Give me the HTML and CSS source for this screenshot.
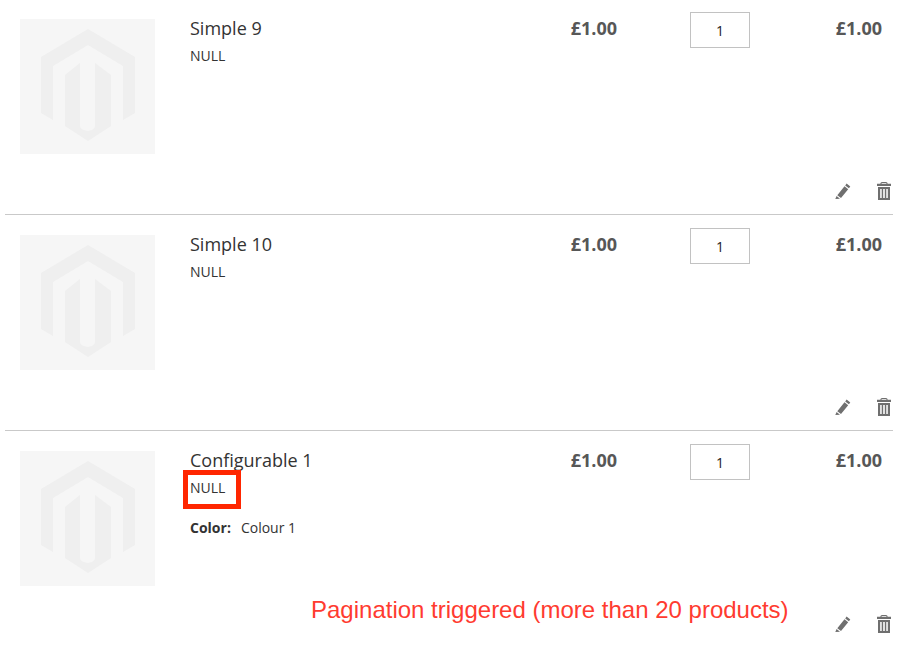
FILE: index.html
```html
<!DOCTYPE html>
<html lang="en">
<head>
<meta charset="utf-8">
<title>Cart</title>
<link rel="stylesheet" href="styles.css">
</head>
<body>
<svg class="defs" width="0" height="0" aria-hidden="true">
  <symbol id="logo" viewBox="0 0 135 135">
    <path d="M68 10L115 38V94L103 101V47L68 26L33 47V101L21 94V38Z"/>
    <path d="M45 56L60 44V107Q60 111 68 112Q75 111 75 107V44L91 56V107L68 122L45 107Z"/>
  </symbol>
  <symbol id="pencil" viewBox="0 0 16 16">
    <path d="M11.6 0.6L15.3 3.5L13.9 5.3L10.2 2.4ZM9.5 3.3L13.2 6.2L6 15.1L2.3 12.3ZM1.6 13L5 15.7L0.3 16Z"/>
  </symbol>
  <symbol id="trash" viewBox="0 0 14 18">
    <path d="M5 0H9Q10.500 0 10.700 1.700H14V4H0V1.700H3.300Q3.500 0 5 0ZM5 1.100Q4.500 1.100 4.400 1.700H9.600Q9.500 1.100 9 1.100Z"/>
    <path fill-rule="evenodd" d="M1 5H13V18H1ZM3.200 7V16H4.700V7ZM6.200 7V16H7.800V7ZM9.300 7V16H10.800V7Z"/>
  </symbol>
</svg>
<main class="cart">
  <article class="row">
    <div class="thumb"><svg class="logo"><use href="#logo"/></svg></div>
    <div class="details">
      <div class="name">Simple 9</div>
      <div class="sku">NULL</div>
    </div>
    <div class="price">£1.00</div>
    <div class="qty"><input class="qty-input" type="text" value="1" aria-label="Qty"></div>
    <div class="price subtotal">£1.00</div>
    <div class="actions">
      <svg class="pencil"><use href="#pencil"/></svg>
      <svg class="trash"><use href="#trash"/></svg>
    </div>
  </article>
  <article class="row">
    <div class="thumb"><svg class="logo"><use href="#logo"/></svg></div>
    <div class="details">
      <div class="name">Simple 10</div>
      <div class="sku">NULL</div>
    </div>
    <div class="price">£1.00</div>
    <div class="qty"><input class="qty-input" type="text" value="1" aria-label="Qty"></div>
    <div class="price subtotal">£1.00</div>
    <div class="actions">
      <svg class="pencil"><use href="#pencil"/></svg>
      <svg class="trash"><use href="#trash"/></svg>
    </div>
  </article>
  <article class="row">
    <div class="thumb"><svg class="logo"><use href="#logo"/></svg></div>
    <div class="details">
      <div class="name">Configurable 1</div>
      <div class="sku">NULL</div>
      <div class="option"><b>Color:</b><span>Colour 1</span></div>
    </div>
    <div class="price">£1.00</div>
    <div class="qty"><input class="qty-input" type="text" value="1" aria-label="Qty"></div>
    <div class="price subtotal">£1.00</div>
    <div class="actions">
      <svg class="pencil"><use href="#pencil"/></svg>
      <svg class="trash"><use href="#trash"/></svg>
    </div>
  </article>
</main>
<div class="highlight"></div>
<div class="note">Pagination triggered (more than 20 products)</div>
</body>
</html>
```

FILE: styles.css
```css
html, body {
  margin: 0;
  height: 646px;
  overflow: hidden;
  background: #fff;
}
body {
  position: relative;
  font-family: "Open Sans", sans-serif;
  color: #333;
}
.defs { position: absolute; }
.cart {
  margin: -1px 13px 0 5px;
}
.row {
  box-sizing: border-box;
  height: 216px;
  padding: 20px 11px 0 15px;
  border-bottom: 1px solid #c9c9c9;
  display: grid;
  grid-template-columns: 135px 35px 1fr 60px 73px 60px 132px;
  grid-template-rows: 1fr auto;
}
.row:last-child { border-bottom: 0; }
.thumb {
  grid-column: 1;
  grid-row: 1 / 3;
  width: 135px;
  height: 135px;
  background: #f6f6f6;
}
.logo {
  display: block;
  width: 135px;
  height: 135px;
  fill: #efefef;
}
.details {
  grid-column: 3;
  grid-row: 1;
}
.name {
  font-size: 18px;
  line-height: 18px;
  color: #333;
}
.sku {
  margin-top: 9px;
  font-size: 14px;
  line-height: 20px;
}
.option {
  margin-top: 20px;
  font-size: 14px;
  line-height: 20px;
  display: flex;
  gap: 10px;
}
.option b { font-weight: 700; }
.price {
  grid-column: 4;
  grid-row: 1;
  font-size: 18px;
  font-weight: 700;
  line-height: 18px;
  color: #575757;
  text-align: right;
}
.qty {
  grid-column: 6;
  grid-row: 1;
  margin-top: -7px;
}
.price.subtotal { grid-column: 7; }
.qty-input {
  display: block;
  box-sizing: border-box;
  width: 60px;
  height: 36px;
  padding: 1px 0 0;
  border: 1px solid #c2c2c2;
  border-radius: 0;
  background: #fff;
  font-family: "Open Sans", sans-serif;
  font-size: 14px;
  text-align: center;
  color: #222;
}
.actions {
  grid-column: 3 / 8;
  grid-row: 2;
  justify-self: end;
  display: flex;
  align-items: center;
  gap: 26px;
  margin: 0 -9px 14px 0;
}
.pencil { width: 16px; height: 16px; fill: #6f6f6f; }
.trash { width: 14px; height: 18px; fill: #6f6f6f; }
.highlight {
  position: absolute;
  left: 183px;
  top: 470px;
  box-sizing: border-box;
  width: 58px;
  height: 39px;
  border: 5px solid #ff2600;
}
.note {
  position: absolute;
  left: 311px;
  top: 596px;
  font-family: "Liberation Sans", sans-serif;
  font-size: 24px;
  line-height: 28px;
  white-space: nowrap;
  color: #ff3b30;
}
```
